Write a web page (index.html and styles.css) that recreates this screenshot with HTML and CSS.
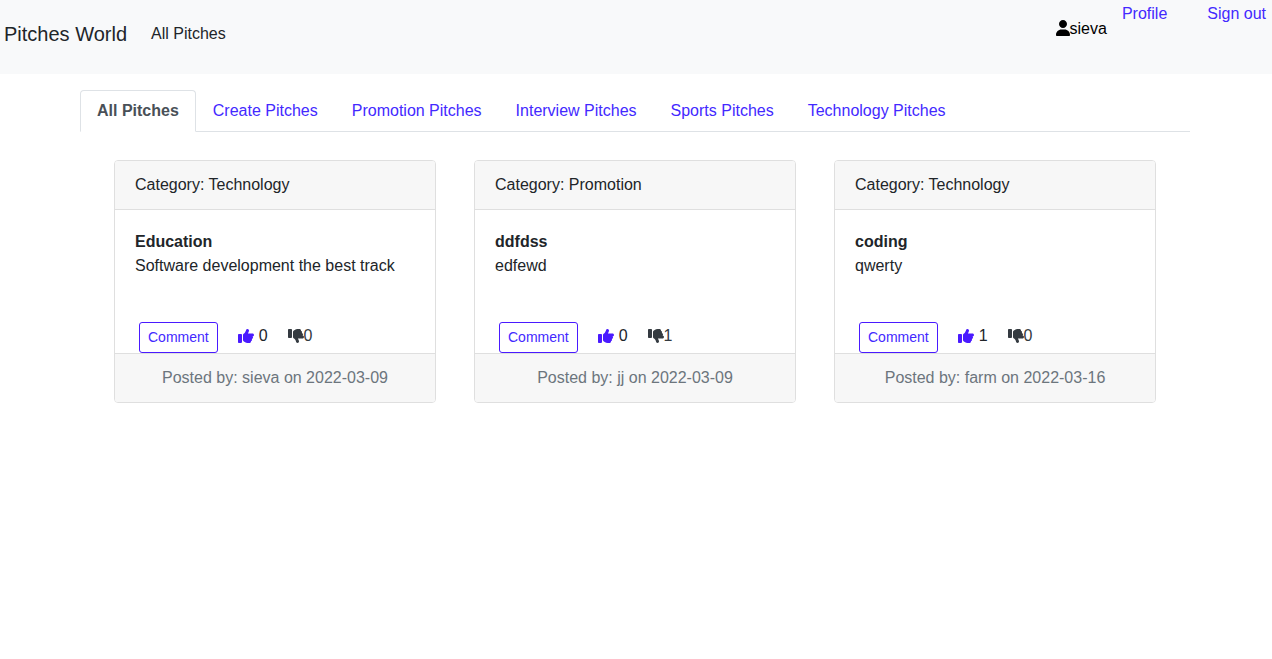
FILE: index.html
```html
<!DOCTYPE html>
<html lang="en">
<head>
<meta charset="utf-8">
<meta name="viewport" content="width=device-width, initial-scale=1">
<title>Pitches World</title>
<link rel="stylesheet" href="styles.css">
</head>
<body>
<svg class="sprite" aria-hidden="true">
  <symbol id="user" viewBox="0 0 448 512"><path d="M224 256c70.7 0 128-57.31 128-128s-57.3-128-128-128C153.3 0 96 57.31 96 128S153.3 256 224 256zM274.7 304H173.3C77.61 304 0 381.6 0 477.3c0 19.14 15.52 34.67 34.66 34.67h378.7C432.5 512 448 496.5 448 477.3C448 381.6 370.4 304 274.7 304z"/></symbol>
  <symbol id="up" viewBox="0 0 512 512"><path d="M128 447.1V223.1c0-17.67-14.33-31.1-32-31.1H32c-17.67 0-32 14.33-32 31.1v223.1c0 17.67 14.33 31.1 32 31.1h64C113.7 479.1 128 464.8 128 447.1zM512 224.1c0-26.5-21.48-47.98-48-47.98h-146.5c22.77-37.91 34.52-80.88 34.52-96.02C352 56.52 333.5 32 302.5 32c-63.13 0-26.36 76.15-108.2 141.6L178 186.6C166.2 196.1 160.2 210 160.1 224c-.0234 .0234 0 0 0 0L160 384c0 15.1 7.113 29.33 19.2 38.39l34.14 25.59C241 468.8 274.7 480 309.3 480H368c26.52 0 48-21.47 48-47.98c0-3.635-.4805-7.143-1.246-10.55C434 415.2 448 397.4 448 376c0-9.148-2.697-17.61-7.139-24.88C463.1 347 480 327.5 480 304.1c0-12.5-4.893-23.78-12.72-32.32C492.2 270.1 512 249.5 512 224.1z"/></symbol>
  <symbol id="down" viewBox="0 0 512 512"><path d="M96 32.04H32c-17.67 0-32 14.32-32 31.1v223.1c0 17.67 14.33 31.1 32 31.1h64c17.67 0 32-14.33 32-31.1V64.03C128 46.36 113.7 32.04 96 32.04zM467.3 240.2C475.1 231.7 480 220.4 480 207.9c0-23.47-16.87-42.92-39.14-47.09C445.3 153.6 448 145.1 448 135.1c0-21.32-14-39.18-33.25-45.43C415.5 87.12 416 83.61 416 79.98C416 53.47 394.5 32 368 32h-58.69c-34.61 0-68.28 11.22-95.97 31.98L179.2 89.57C167.1 98.63 160 112.9 160 127.1l.1074 160c0 0-.0234-.0234 0 0c.0703 13.99 6.123 27.94 17.91 37.36l16.3 13.03C276.2 403.9 239.4 480 302.5 480c30.96 0 49.5-24.52 49.5-48.11c0-15.15-11.76-58.12-34.52-96.02H464c26.52 0 48-21.47 48-47.98C512 262.5 492.2 241.9 467.3 240.2z"/></symbol>
</svg>
<header class="navbar">
  <nav class="nav-main" aria-label="Main">
    <a class="brand" href="#">Pitches World</a>
    <a class="nav-link" href="#">All Pitches</a>
  </nav>
  <div class="account">
    <span class="user"><svg class="icon-user" aria-hidden="true"><use href="#user"/></svg>sieva</span>
    <a class="profile" href="#">Profile</a>
    <a href="#">Sign out</a>
  </div>
</header>
<main class="page">
  <div class="container">
    <nav class="tabs" aria-label="Categories">
      <a class="tab active" href="#" aria-current="page">All Pitches</a>
      <a class="tab" href="#">Create Pitches</a>
      <a class="tab" href="#">Promotion Pitches</a>
      <a class="tab" href="#">Interview Pitches</a>
      <a class="tab" href="#">Sports Pitches</a>
      <a class="tab" href="#">Technology Pitches</a>
    </nav>
    <div class="cards">
      <article class="card">
        <div class="card-header">Category: Technology</div>
        <div class="card-body">
          <h2 class="title">Education</h2>
          <p class="text">Software development the best track</p>
          <div class="actions">
            <button class="comment" type="button">Comment</button>
            <button class="vote up" type="button" aria-label="Like, 0"><svg class="icon" aria-hidden="true"><use href="#up"/></svg><span>0</span></button>
            <button class="vote down" type="button" aria-label="Dislike, 0"><svg class="icon" aria-hidden="true"><use href="#down"/></svg><span>0</span></button>
          </div>
        </div>
        <div class="card-footer">Posted by: sieva on 2022-03-09</div>
      </article>
      <article class="card">
        <div class="card-header">Category: Promotion</div>
        <div class="card-body">
          <h2 class="title">ddfdss</h2>
          <p class="text">edfewd</p>
          <div class="actions">
            <button class="comment" type="button">Comment</button>
            <button class="vote up" type="button" aria-label="Like, 0"><svg class="icon" aria-hidden="true"><use href="#up"/></svg><span>0</span></button>
            <button class="vote down" type="button" aria-label="Dislike, 1"><svg class="icon" aria-hidden="true"><use href="#down"/></svg><span>1</span></button>
          </div>
        </div>
        <div class="card-footer">Posted by: jj on 2022-03-09</div>
      </article>
      <article class="card">
        <div class="card-header">Category: Technology</div>
        <div class="card-body">
          <h2 class="title">coding</h2>
          <p class="text">qwerty</p>
          <div class="actions">
            <button class="comment" type="button">Comment</button>
            <button class="vote up" type="button" aria-label="Like, 1"><svg class="icon" aria-hidden="true"><use href="#up"/></svg><span>1</span></button>
            <button class="vote down" type="button" aria-label="Dislike, 0"><svg class="icon" aria-hidden="true"><use href="#down"/></svg><span>0</span></button>
          </div>
        </div>
        <div class="card-footer">Posted by: farm on 2022-03-16</div>
      </article>
    </div>
  </div>
</main>
</body>
</html>
```
FILE: styles.css
```css
* { box-sizing: border-box; }

body {
  margin: 0;
  background: #fff;
  color: #212529;
  font-family: "Liberation Sans", Arial, sans-serif;
  font-size: 16px;
  line-height: 24px;
}

a { color: #4329ff; text-decoration: none; }
button { font-family: inherit; cursor: pointer; }
.sprite { display: none; }

.navbar {
  display: flex;
  justify-content: space-between;
  background: #f8f9fa;
  padding: 0 6px 0 4px;
}
.nav-main {
  display: flex;
  align-items: center;
  gap: 24px;
  padding: 19px 0 25px;
}
.brand { color: #212529; font-size: 20px; line-height: 30px; }
.nav-link { color: #212529; }

.account { display: flex; align-items: flex-start; padding-top: 2px; }
.user { display: flex; color: #000; padding-top: 15px; margin-right: 15px; }
.icon-user { width: 14px; height: 16px; margin-top: 3px; fill: currentColor; }
.profile { margin-right: 40px; }

.page { padding: 16px 2px 0 0; }
.container { max-width: 1110px; margin: 0 auto; }

.tabs { display: flex; flex-wrap: wrap; border-bottom: 1px solid #dee2e6; }
.tab {
  margin-bottom: -1px;
  padding: 8px 16px;
  border: 1px solid transparent;
  border-radius: 4px 4px 0 0;
}
.tab.active {
  color: #495057;
  font-weight: bold;
  background: #fff;
  border-color: #dee2e6 #dee2e6 #fff;
}

.cards {
  display: grid;
  grid-template-columns: repeat(3, minmax(0, 1fr));
  gap: 38px;
  padding: 28px 34px 0;
}
.card {
  background: #fff;
  border: 1px solid #dfdfdf;
  border-radius: 4px;
  overflow: hidden;
}
.card-header { padding: 12px 20px; background: #f7f7f7; border-bottom: 1px solid #dfdfdf; }
.card-body { padding: 20px 20px 0; }
.title { margin: 0; font-size: 16px; line-height: 24px; font-weight: bold; }
.text { margin: 0; }
.actions { display: flex; align-items: flex-start; gap: 20px; margin: 44px 0 0 4px; }
.comment {
  padding: 4px 8px;
  border: 1px solid #4a1aff;
  border-radius: 3px;
  background: transparent;
  color: #4329ff;
  font-size: 14px;
  line-height: 21px;
}
.vote {
  display: flex;
  align-items: flex-start;
  padding: 2px 0 0;
  border: 0;
  background: none;
  color: #212529;
  font-size: 16px;
  line-height: 24px;
}
.icon { width: 16px; height: 16px; margin-top: 4px; fill: currentColor; }
.up { gap: 5px; }
.up .icon { fill: #4a1aff; }
.down { color: #343a40; }
.card-footer {
  padding: 12px 20px;
  background: #f7f7f7;
  border-top: 1px solid #dfdfdf;
  color: #6c757d;
  text-align: center;
}
```
